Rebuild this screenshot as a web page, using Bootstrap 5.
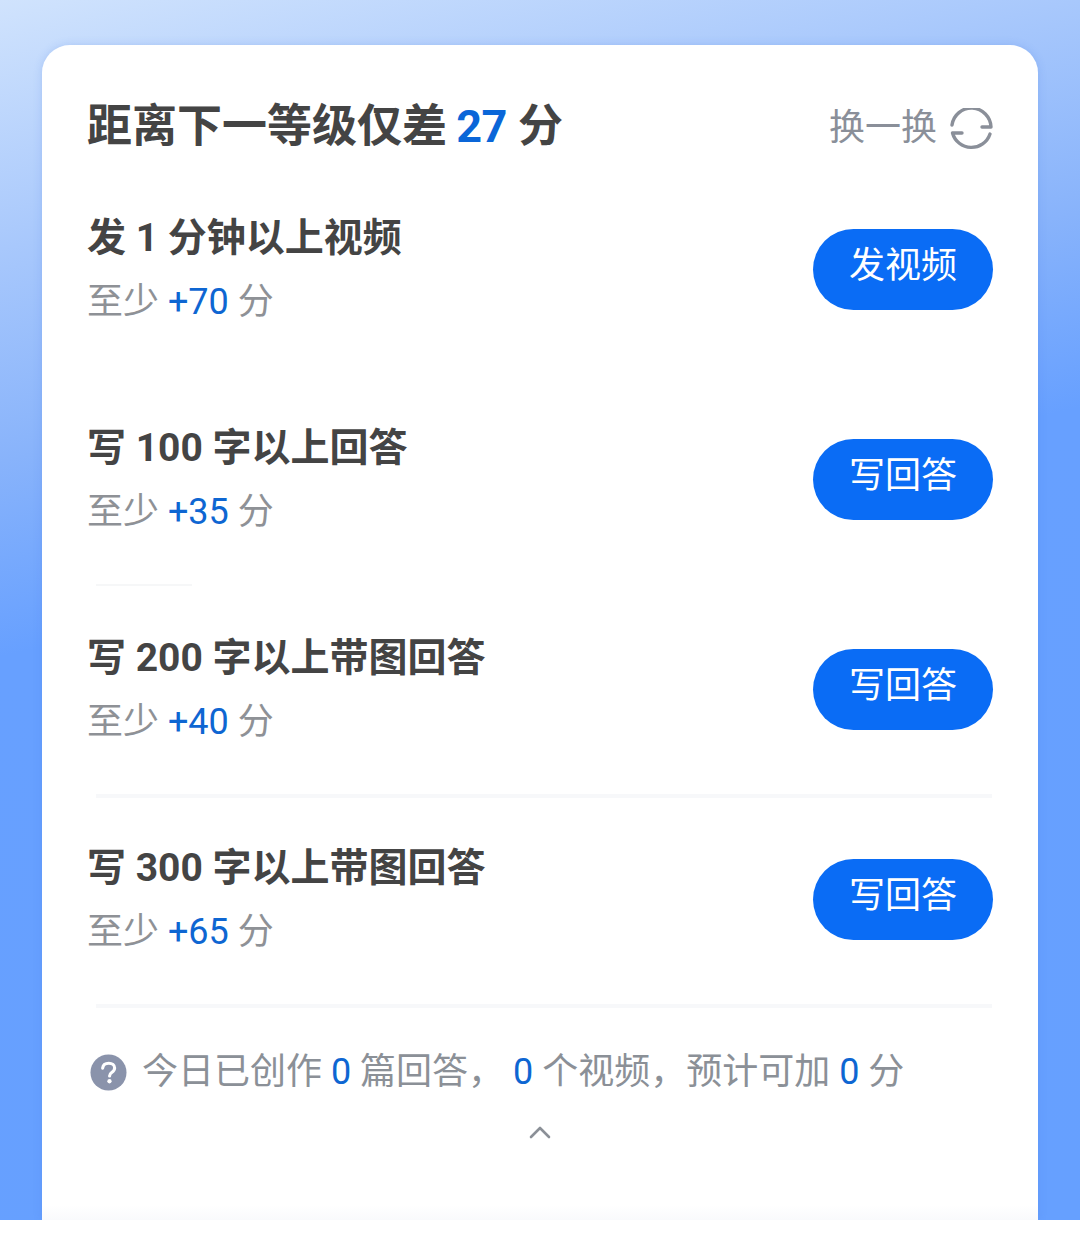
<!doctype html>
<html lang="zh">
<head>
<meta charset="utf-8">
<title>距离下一等级</title>
<link rel="stylesheet" href="https://cdn.jsdelivr.net/npm/bootstrap@5.3.0/dist/css/bootstrap.min.css">
<style>
html,body{height:1245px;overflow:hidden;background:#fff;}
body{font-family:"Roboto","Noto Sans CJK SC",sans-serif;color:#444;}
.stage{height:1220px;padding:45px 42px 0;background:linear-gradient(167deg,#d0e3fd 0,#a8c8fc 243px,#88b3fb 450px,#67a0ff 640px,#66a0ff 100%);}
.sheet{height:1175px;background:linear-gradient(180deg,#fff 0,#fff 1160px,#f9fafc 1175px);border-radius:28px 28px 0 0;padding:0 45px;box-shadow:0 0 8px rgba(70,120,220,.22);}
.head{height:120px;padding-top:44px;}
.head-title{font-size:45px;line-height:64px;font-weight:700;margin:0;color:#444;}
.head-title .num{letter-spacing:-.5px;margin-left:-2px;}
.num{color:#0a66d8;}
.swap{color:#8a8f99;font-size:36px;line-height:50px;}
.swap span{margin-top:2px;}
.swap svg{margin-left:12px;margin-top:5px;}
.task{height:210px;padding-top:45px;position:relative;}
.task-line::after{content:"";position:absolute;left:9px;right:1px;bottom:-3px;height:4px;background:#f7f8fa;}
.task-short::after{content:"";position:absolute;left:9px;bottom:-1px;width:96px;height:2px;background:#f6f7f8;}
.task-title{font-size:39px;line-height:56px;font-weight:700;margin:0;color:#444;}
.task-sub{font-size:36px;line-height:50px;color:#8e9196;margin:11px 0 0;}
.task-sub .num{color:#0e66d2;}
.go{width:180px;height:81px;margin-top:19px;padding:0 0 7px;border:0;border-radius:40.5px;background:#0a6cf5;color:#fff;font-size:36px;line-height:70px;}
.go:hover{background:#0a6cf5;color:#fff;}
.tip{margin-top:39px;font-size:36px;line-height:56px;color:#8b9097;padding-left:3px;white-space:nowrap;}
.tip .num{color:#0e66d2;}
.tip svg{flex:none;margin:1px 15px 0 0;}
.fold{margin-top:25px;}
.foot{height:25px;background:#fff;}
</style>
</head>
<body>
<div class="stage">
  <div class="sheet">
    <div class="head d-flex justify-content-between align-items-center">
      <h1 class="head-title">距离下一等级仅差 <span class="num">27</span> 分</h1>
      <div class="swap d-flex align-items-center">
        <span>换一换</span>
        <svg width="44" height="44" viewBox="0 0 44 44" fill="none" stroke="#8a8f99" stroke-width="3.4" stroke-linecap="round" stroke-linejoin="round"><path d="M3 17A19.600 19.600 0 0 1 42 19H33"/><path d="M41 26A19.600 19.600 0 0 1 3.500 25H13"/></svg>
      </div>
    </div>
    <div class="task d-flex justify-content-between">
      <div><p class="task-title">发 1 分钟以上视频</p><p class="task-sub">至少 <span class="num">+70</span> 分</p></div>
      <button class="btn go" type="button">发视频</button>
    </div>
    <div class="task task-short d-flex justify-content-between">
      <div><p class="task-title">写 100 字以上回答</p><p class="task-sub">至少 <span class="num">+35</span> 分</p></div>
      <button class="btn go" type="button">写回答</button>
    </div>
    <div class="task task-line d-flex justify-content-between">
      <div><p class="task-title">写 200 字以上带图回答</p><p class="task-sub">至少 <span class="num">+40</span> 分</p></div>
      <button class="btn go" type="button">写回答</button>
    </div>
    <div class="task task-line d-flex justify-content-between">
      <div><p class="task-title">写 300 字以上带图回答</p><p class="task-sub">至少 <span class="num">+65</span> 分</p></div>
      <button class="btn go" type="button">写回答</button>
    </div>
    <div class="tip d-flex align-items-center">
      <svg width="37" height="37" viewBox="0 0 38 38"><circle cx="19" cy="19" r="18.500" fill="#8a93ab"/><path d="M13 14.500c.4-3.400 3-5 6.300-5 3.400 0 6 1.900 6 4.900 0 2.400-1.400 3.500-3 4.600-1.500 1-2.200 1.800-2.200 3.600" fill="none" stroke="#fff" stroke-width="3.200" stroke-linecap="round"/><circle cx="20" cy="28" r="2.200" fill="#fff"/></svg>
      <span>今日已创作 <span class="num">0</span> 篇回答， <span class="num">0</span> 个视频，预计可加 <span class="num">0</span> 分</span>
    </div>
    <div class="fold d-flex justify-content-center">
      <svg width="24" height="14" viewBox="0 0 24 14" fill="none" stroke="#8b9097" stroke-width="2.600" stroke-linecap="round" stroke-linejoin="round"><path d="M3 12 12 3l9 9"/></svg>
    </div>
  </div>
</div>
<div class="foot"></div>
<script src="https://cdn.jsdelivr.net/npm/bootstrap@5.3.0/dist/js/bootstrap.bundle.min.js"></script>
</body>
</html>
